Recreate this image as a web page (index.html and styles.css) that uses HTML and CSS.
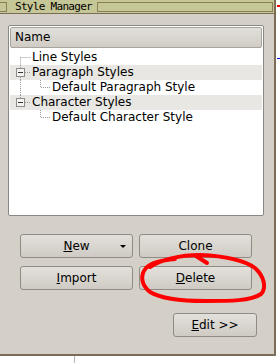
FILE: index.html
```html
<!DOCTYPE html>
<html lang="en">
<head>
    <meta charset="UTF-8">
    <title>Style Manager</title>
    <link rel="stylesheet" href="styles.css">
</head>
<body>
<div class="screen">
    <div class="window">
        <div class="titlebar">
            <span class="tb-stub"></span>
            <span class="tb-title">Style Manager</span>
            <span class="tb-fill"></span>
        </div>
        <div class="body">
            <div class="tree">
                <div class="tree-head">Name</div>
                <div class="tree-rows">
                    <div class="row">
                        <svg class="branch" width="22" height="15">
                            <path d="M10.5 7.5V15M10.5 7.5H21" />
                        </svg>
                        <span>Line Styles</span>
                    </div>
                    <div class="row alt">
                        <svg class="branch" width="22" height="15">
                            <path d="M10.5 0V15M15 7.5H21" />
                            <rect class="box" x="6.5" y="3.5" width="8" height="8" />
                            <path class="minus" d="M8 7.5H13" />
                        </svg>
                        <span>Paragraph Styles</span>
                    </div>
                    <div class="row">
                        <svg class="branch" width="42" height="15">
                            <path d="M10.5 0V15M30.5 0V7.5H40" />
                        </svg>
                        <span>Default Paragraph Style</span>
                    </div>
                    <div class="row alt">
                        <svg class="branch" width="22" height="15">
                            <path d="M10.5 0V4M15 7.5H21" />
                            <rect class="box" x="6.5" y="3.5" width="8" height="8" />
                            <path class="minus" d="M8 7.5H13" />
                        </svg>
                        <span>Character Styles</span>
                    </div>
                    <div class="row">
                        <svg class="branch" width="42" height="15">
                            <path d="M30.5 0V7.5H40" />
                        </svg>
                        <span>Default Character Style</span>
                    </div>
                </div>
            </div>
            <div class="actions">
                <button class="btn btn-menu"><span><u>N</u>ew</span><span class="arrow"></span></button>
                <button class="btn">Clone</button>
                <button class="btn"><u>I</u>mport</button>
                <button class="btn"><u>D</u>elete</button>
            </div>
            <div class="footer">
                <button class="btn btn-edit"><u>E</u>dit &gt;&gt;</button>
            </div>
        </div>
        <svg class="scribble" width="276" height="356">
            <path d="M150 267 C160 260 180 255 200 255 C225 256 244 260 255 268 C264 276 267 288 261 294 C251 301 230 301 205 301 C180 301 160 298 150 292 C141 285 140 275 146 268 C152 262 163 260 175 259 M196 256 L207 263" />
        </svg>
    </div>
    <div class="side">
        <i class="mark-red"></i>
        <i class="mark-blue"></i>
    </div>
</div>
<div class="below"><i class="below-line"></i></div>
</body>
</html>
```

FILE: styles.css
```css
body {
    margin: 0;
    background-color: #ffffff;
    font-family: "DejaVu Sans", sans-serif;
    font-size: 12px;
    color: #000000;
}
.screen {
    display: flex;
}
.window {
    position: relative;
    width: 274px;
    height: 354px;
    background-color: #d4d0c8;
    border-right: 2px solid #7b6c55;
    border-bottom: 2px solid #7b6c55;
}
.titlebar {
    display: flex;
    align-items: center;
    height: 13px;
    background-color: #c6c796;
    border-bottom: 1px solid #7b6c55;
}
.tb-stub {
    width: 6px;
    height: 8px;
    border: 1px solid #8b7d5a;
    border-left: none;
}
.tb-title {
    margin: 0 5px 0 8px;
    font-family: "DejaVu Sans Mono", monospace;
    font-size: 11px;
    letter-spacing: -0.7px;
    line-height: 13px;
}
.tb-fill {
    flex: 1;
    height: 8px;
    margin-right: 1px;
    border: 1px solid #8b7d5a;
}
.body {
    padding: 11px 0 0 8px;
}
.tree {
    width: 256px;
    height: 191px;
    box-sizing: border-box;
    padding: 1px;
    background-color: #ffffff;
    border: 1px solid #8a8882;
    border-radius: 2px;
}
.tree-head {
    height: 19px;
    line-height: 19px;
    padding-left: 4px;
    background: linear-gradient(#e2e0db, #d0ccc5);
    border: 1px solid #a7a49d;
    border-radius: 2px;
}
.tree-rows {
    padding-top: 2px;
}
.row {
    display: flex;
    align-items: center;
    height: 15px;
    line-height: 15px;
}
.row.alt {
    background-color: #e8e7e3;
}
.branch {
    flex: none;
}
.branch path {
    fill: none;
    stroke: #9a9a9a;
    stroke-width: 1;
    stroke-dasharray: 1 1;
}
.branch .box {
    fill: #f4f3f1;
    stroke: #8c8c8c;
}
.branch .minus {
    stroke: #333333;
    stroke-dasharray: none;
}
.actions {
    display: grid;
    grid-template-columns: 113px 113px;
    gap: 8px 6px;
    margin: 18px 0 0 12px;
}
.btn {
    height: 24px;
    padding: 0;
    font-family: "DejaVu Sans", sans-serif;
    font-size: 12px;
    color: #000000;
    background: linear-gradient(#e3e0db, #cfcbc4);
    border: 1px solid #8f8c85;
    border-radius: 3px;
}
.btn-menu {
    position: relative;
}
.btn-menu .arrow {
    position: absolute;
    right: 6px;
    top: 10px;
    border-left: 3px solid transparent;
    border-right: 3px solid transparent;
    border-top: 3px solid #000000;
}
.footer {
    display: flex;
    justify-content: flex-end;
    width: 249px;
    margin-top: 23px;
}
.btn-edit {
    width: 84px;
}
.scribble {
    position: absolute;
    left: 0;
    top: 0;
    pointer-events: none;
}
.scribble path {
    fill: none;
    stroke: #ff0000;
    stroke-width: 4;
    stroke-linecap: round;
    stroke-linejoin: round;
}
.side {
    position: relative;
    width: 4px;
}
.mark-red {
    position: absolute;
    left: 1px;
    top: 5px;
    width: 3px;
    height: 2px;
    background-color: #ff0000;
}
.mark-blue {
    position: absolute;
    left: 1px;
    top: 58px;
    width: 3px;
    height: 1px;
    background-color: #0000ff;
}
.below {
    height: 7px;
}
.below-line {
    display: block;
    margin-left: 74px;
    width: 1px;
    height: 7px;
    background-color: #b5b3ae;
}
```
